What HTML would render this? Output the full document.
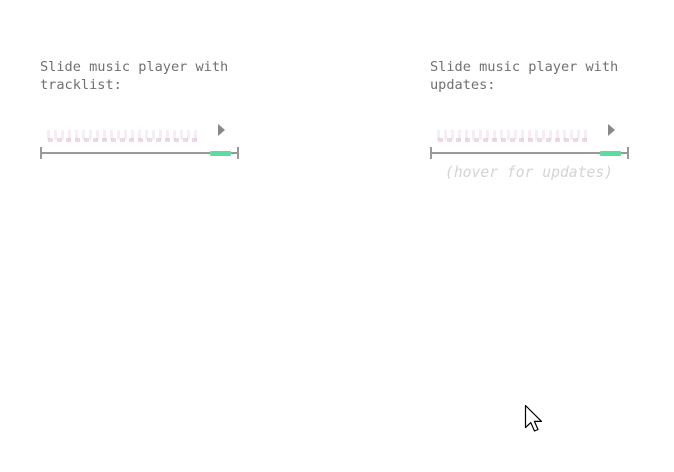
<!DOCTYPE html>
<html><head><style>
body{margin:0;width:674px;height:472px;background:#fff;position:relative;overflow:hidden;font-family:"DejaVu Sans Mono",monospace}
.t{position:absolute;font-size:13.6px;line-height:18px;color:#707070;white-space:pre}
.dots{position:absolute;height:10px;width:152px;background:
repeating-linear-gradient(90deg,rgba(230,205,225,.35) 0 3px,transparent 3px 7px)}
.dots2{position:absolute;height:4px;width:152px;background:
repeating-linear-gradient(90deg,rgba(215,170,205,.45) 0 5px,transparent 5px 9px)}
.line{position:absolute;height:2px;width:198px;background:#999}
.tick{position:absolute;width:2px;height:12px;background:#999}
.g{position:absolute;width:21px;height:5px;background:#5ddba0;border-radius:1px}
.tri{position:absolute;width:0;height:0;border-left:7px solid #888;border-top:6px solid transparent;border-bottom:6px solid transparent}
</style></head><body>
<div class="t" style="left:40px;top:58px">Slide music player with
tracklist:</div>
<div class="t" style="left:430px;top:58px">Slide music player with
updates:</div>

<div class="dots" style="left:47px;top:130px"></div>
<div class="dots2" style="left:48px;top:138px"></div>
<div class="tri" style="left:218px;top:124px"></div>
<div class="line" style="left:40px;top:152px"></div>
<div class="tick" style="left:40px;top:147px"></div>
<div class="tick" style="left:237px;top:147px"></div>
<div class="g" style="left:210px;top:151px"></div>

<div class="dots" style="left:437px;top:130px"></div>
<div class="dots2" style="left:438px;top:138px"></div>
<div class="tri" style="left:608px;top:124px"></div>
<div class="line" style="left:430px;top:152px"></div>
<div class="tick" style="left:430px;top:147px"></div>
<div class="tick" style="left:627px;top:147px"></div>
<div class="g" style="left:600px;top:151px"></div>
<div class="t" style="left:445px;top:164px;font-size:14.7px;color:#d4d4d4;font-style:italic">(hover for updates)</div>

<svg style="position:absolute;left:524px;top:404px" width="22" height="30" viewBox="0 0 22 30">
<path d="M1.5 1.5 L1.5 23.5 L6.8 18.6 L10.5 27 L14 25.5 L10.4 17.4 L17.5 17.4 Z" fill="#fff" stroke="#000" stroke-width="1.2" stroke-linejoin="round"/>
</svg>
</body></html>
